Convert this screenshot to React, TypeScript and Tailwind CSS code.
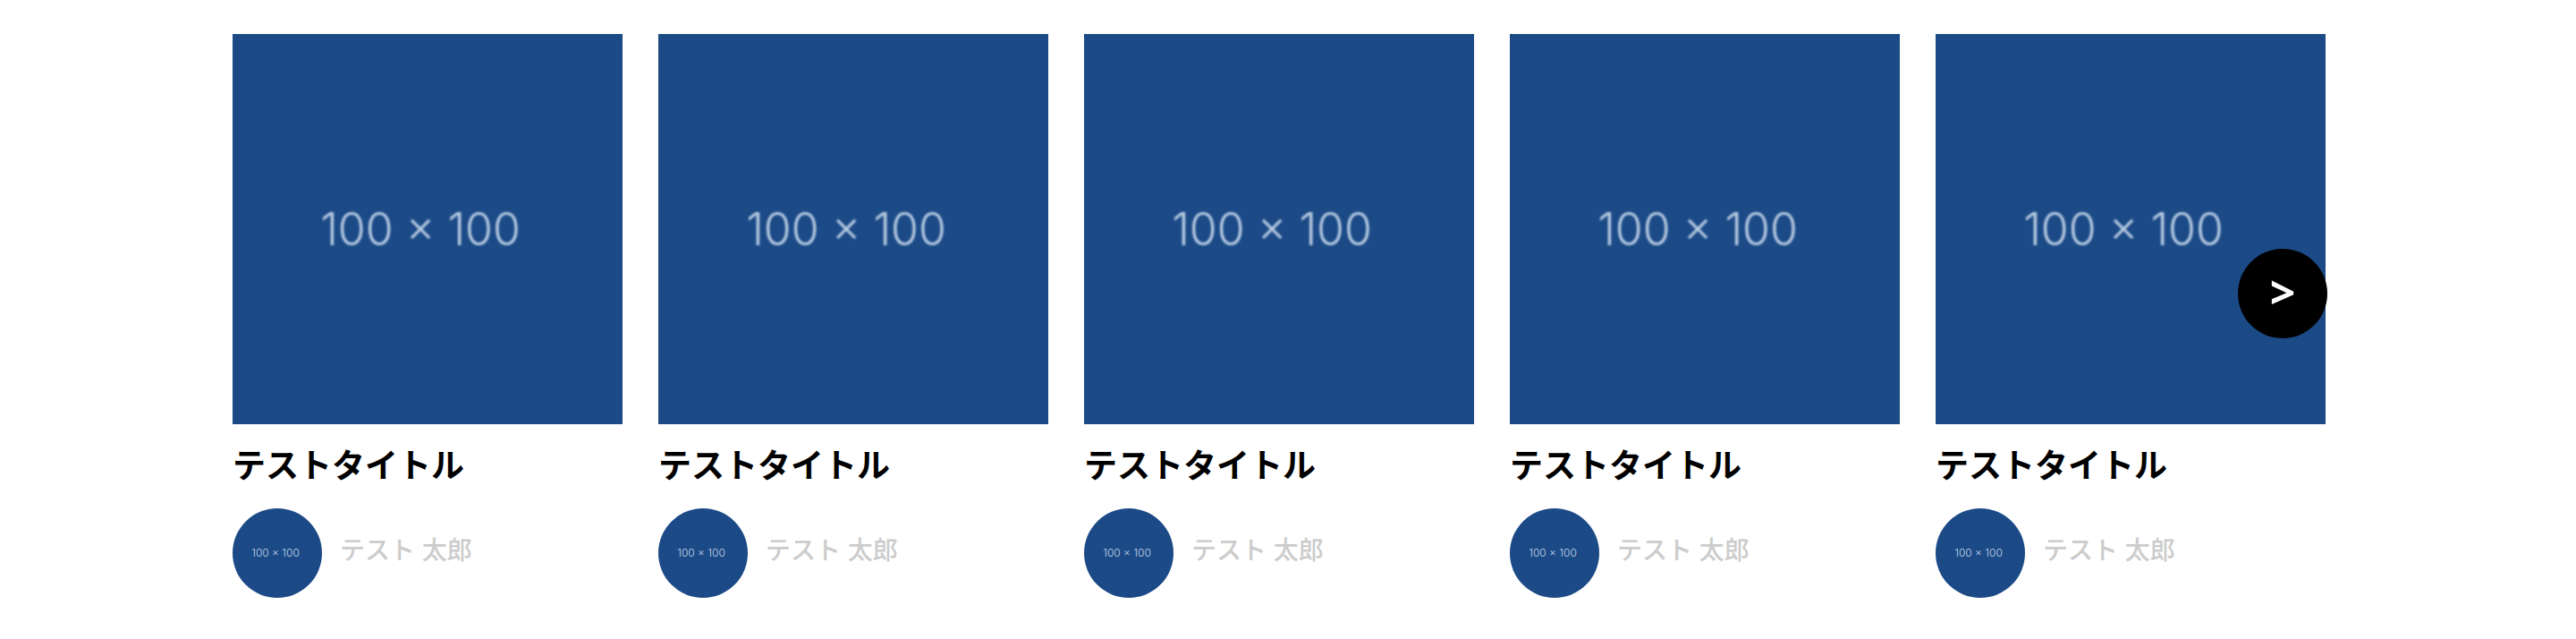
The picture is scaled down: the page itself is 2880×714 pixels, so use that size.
type Item = { id: number; title: string; author: string };

const items: Item[] = [1, 2, 3, 4, 5].map((id) => ({
  id,
  title: "テストタイトル",
  author: "テスト 太郎",
}));

function Card({ item }: { item: Item }) {
  return (
    <li className="min-w-0">
      <a href="#" className="block">
        <div className="flex aspect-square items-center justify-center bg-[#1b4a87] pr-4">
          <span className="whitespace-nowrap font-[Inter,sans-serif] text-[50px] leading-none font-light text-[#b9cce2] blur-[1px]">
            100 × 100
          </span>
        </div>
        <h2 className="mt-[22px] text-[37px] leading-[52px] font-bold text-black">{item.title}</h2>
      </a>
      <div className="mt-5 flex items-center gap-5">
        <div className="flex size-[100px] shrink-0 items-center justify-center rounded-full bg-[#1b4a87] pr-1">
          <span className="whitespace-nowrap font-[Inter,sans-serif] text-[12px] leading-none font-light text-[#c3d3e6]">
            100 × 100
          </span>
        </div>
        <p className="pb-1 text-[28px] leading-10 font-medium text-[#cccccc]">{item.author}</p>
      </div>
    </li>
  );
}

export default function App() {
  return (
    <main className="bg-white pt-[38px] pr-[280px] pb-[46px] pl-[260px] font-['Liberation_Sans','Noto_Sans_CJK_JP',sans-serif]">
      <section className="relative">
        <ul className="grid grid-cols-5 gap-10">
          {items.map((item) => (
            <Card key={item.id} item={item} />
          ))}
        </ul>
        <button
          type="button"
          aria-label="次へ"
          className="absolute top-60 -right-0.5 flex size-[100px] items-center justify-center rounded-full bg-black pb-1 font-['Open_Sans',sans-serif] text-[50px] leading-none font-bold text-white"
        >
          &gt;
        </button>
      </section>
    </main>
  );
}
